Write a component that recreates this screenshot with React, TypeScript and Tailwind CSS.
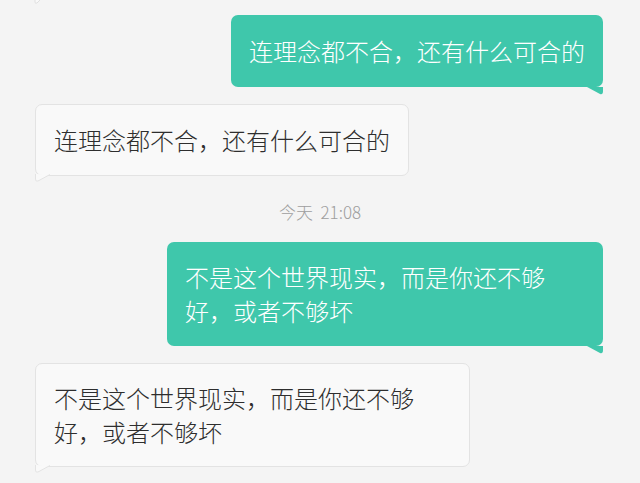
const cjk = { fontFamily: '"Noto Sans CJK SC", "Noto Sans", sans-serif' };

function SentBubble({ children, className = '' }: { children: React.ReactNode; className?: string }) {
  return (
    <div className={`relative self-end mr-[37px] rounded-[7px] bg-[#3fc7ab] px-[18px] text-[24px] font-light text-white ${className}`}>
      {children}
      {/* tail bottom-right */}
      <svg className="absolute right-0 top-full" width="16" height="8" viewBox="0 0 16 8">
        <path d="M0 0 L16 0 L16 4 Q16 8 13 7 Z" fill="#3fc7ab" />
      </svg>
    </div>
  );
}

function RecvBubble({ children, className = '' }: { children: React.ReactNode; className?: string }) {
  return (
    <div className={`relative self-start ml-[35px] rounded-[7px] border border-[#e3e3e3] bg-[#f9f9f9] px-[18px] text-[24px] font-light text-[#2e2e2e] ${className}`}>
      {children}
      {/* tail bottom-left */}
      <svg className="absolute -left-px top-full -mt-px" width="16" height="8" viewBox="0 0 16 8">
        <path d="M0.5 0 L0.5 5 Q0.5 8 3 7 L15 0.5" fill="#f9f9f9" stroke="#e3e3e3" strokeWidth="1" />
      </svg>
    </div>
  );
}

export default function App() {
  return (
    <div className="flex h-[483px] w-[640px] flex-col overflow-hidden bg-[#f4f4f4]" style={cjk}>
      {/* bit of the previous bubble's tail */}
      <div className="h-[4px] pl-[30px]">
        <svg width="10" height="4" viewBox="0 0 10 4">
          <path d="M5 0 L5 2 Q5 4 7 3 L10 0" fill="#f9f9f9" stroke="#e0e0e0" strokeWidth="1" />
        </svg>
      </div>

      <SentBubble className="mt-[11px] py-[18px] leading-[36px]">连理念都不合，还有什么可合的</SentBubble>

      <RecvBubble className="mt-[17px] py-[17px] leading-[36px]">连理念都不合，还有什么可合的</RecvBubble>

      <div className="mt-[26px] h-[20px] text-center text-[17px] font-light leading-[20px] text-[#9e9e9e]">今天&nbsp;&nbsp;21:08</div>

      <SentBubble className="mt-[20px] w-[436px] py-[18px] leading-[34px]">
        不是这个世界现实，而是你还不够
        <br />
        好，或者不够坏
      </SentBubble>

      <RecvBubble className="mt-[17px] w-[435px] py-[17px] leading-[34px]">
        不是这个世界现实，而是你还不够
        <br />
        好，或者不够坏
      </RecvBubble>
    </div>
  );
}
